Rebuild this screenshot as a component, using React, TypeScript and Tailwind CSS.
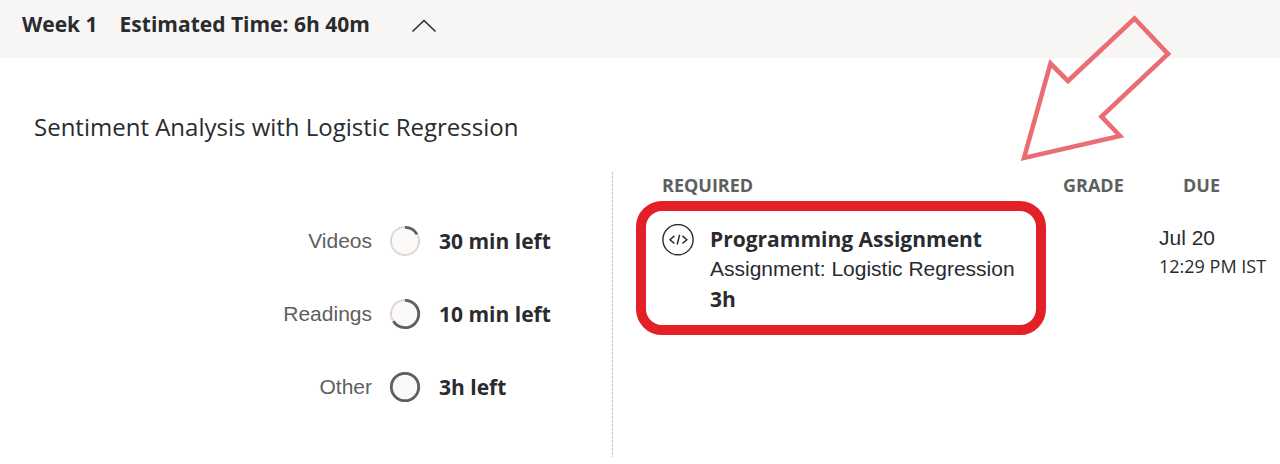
import { useState } from "react";

type Progress = { label: string; left: string; done: number };

const progress: Progress[] = [
  { label: "Videos", left: "30 min left", done: 0.17 },
  { label: "Readings", left: "10 min left", done: 0.66 },
  { label: "Other", left: "3h left", done: 1 },
];

function ProgressRing({ done }: { done: number }) {
  return (
    <svg viewBox="0 0 32 32" className="size-8 shrink-0" aria-hidden="true">
      <circle cx="16" cy="16" r="14" fill="#fcfaf9" stroke="#d6cac7" strokeWidth="2" strokeDasharray="1.6 0.6" />
      <circle
        cx="16"
        cy="16"
        r="13.7"
        fill="none"
        stroke="#5c605f"
        strokeWidth="2.8"
        pathLength="100"
        strokeDasharray={`${done * 100} ${done < 1 ? 100 : 0}`}
        transform="rotate(-90 16 16)"
      />
    </svg>
  );
}

function CodeIcon() {
  return (
    <svg viewBox="0 0 32 32" className="size-8 shrink-0" fill="none" stroke="#2a2b2e" aria-hidden="true">
      <circle cx="16" cy="15.7" r="15.1" strokeWidth="1.4" />
      <path d="M12.4 11.9 8 15.700l4.400 3.800M20.400 11.900l4.400 3.800-4.400 3.800M17.600 10.900 15.200 20.500" strokeWidth="1.5" />
    </svg>
  );
}

function Arrow() {
  return (
    <svg
      viewBox="0 0 152 148"
      className="pointer-events-none absolute bottom-full left-[358px] mb-[61px] h-[148px] w-[152px]"
      fill="none"
      stroke="#e96d72"
      strokeWidth="4.6"
      aria-hidden="true"
    >
      <path d="M4 143 30.500 48.500 48 66 114.500 3.500 148 39 81.500 101.500 100 121Z" />
    </svg>
  );
}

export default function App() {
  const [open, setOpen] = useState(true);
  return (
    <main className="min-h-screen bg-white font-['Open_Sans','Noto_Sans',sans-serif] text-[#2a2b2e]">
      <header className="h-[58px] bg-[#f8f6f5] px-[22px] pt-[10px]">
        <button
          type="button"
          aria-expanded={open}
          onClick={() => setOpen(!open)}
          className="flex items-center text-[21px] leading-7 font-bold"
        >
          <span>Week 1</span>
          <span className="ml-[22px]">Estimated Time: 6h 40m</span>
          <svg
            viewBox="0 0 26 14"
            className={open ? "mt-1 ml-[41px] h-3.5 w-[26px]" : "mt-1 ml-[41px] h-3.5 w-[26px] rotate-180"}
            fill="none"
            stroke="#2a2b2e"
            strokeWidth="1.6"
            aria-hidden="true"
          >
            <path d="M1.500 12.500 13 1.500 24.500 12.500" />
          </svg>
        </button>
      </header>
      {open && (
        <section>
          <h2 className="px-[34px] pt-[51px] text-2xl leading-9">Sentiment Analysis with Logistic Regression</h2>
          <div className="mt-[27px] flex">
            <ul className="flex flex-1 flex-col gap-[41px] pt-[53px] pl-[34px]">
              {progress.map((item) => (
                <li key={item.label} className="flex items-center">
                  <span className="flex-1 text-right font-['Liberation_Sans',Arial,sans-serif] text-[21px] leading-7 text-[#5c605f]">
                    {item.label}
                  </span>
                  <span className="ml-[17px] flex w-[223px] items-center gap-[18px]">
                    <ProgressRing done={item.done} />
                    <span className="text-[21px] leading-7 font-bold">{item.left}</span>
                  </span>
                </li>
              ))}
            </ul>
            <div className="h-[285px] w-px bg-[repeating-linear-gradient(to_bottom,#cfc7c4_0_3px,#f6f3f2_3px_4px)]" />
            <div className="w-[667px] pl-[49px]">
              <table className="w-full text-left">
                <thead className="text-lg leading-[26px] text-[#5c605f]">
                  <tr>
                    <th className="p-0 font-bold">REQUIRED</th>
                    <th className="w-24 p-0 font-bold">GRADE</th>
                    <th className="w-[121px] p-0 pl-6 font-bold">DUE</th>
                  </tr>
                </thead>
                <tbody>
                  <tr className="align-top">
                    <td className="p-0 pt-[26px]">
                      <div className="relative flex gap-4">
                        <CodeIcon />
                        <div className="text-[21px] leading-[30px]">
                          <p className="font-bold">Programming Assignment</p>
                          <p className="font-['Liberation_Sans',Arial,sans-serif]">Assignment: Logistic Regression</p>
                          <p className="font-bold">3h</p>
                        </div>
                        <div className="pointer-events-none absolute -top-[23px] -left-[26px] h-[134px] w-[410px] rounded-[26px] border-10 border-[#e32028]" />
                        <Arrow />
                      </div>
                    </td>
                    <td className="p-0" />
                    <td className="p-0 pt-[26px]">
                      <p className="font-['Liberation_Sans',Arial,sans-serif] text-[21px] leading-7">Jul 20</p>
                      <p className="text-lg leading-7">12:29 PM IST</p>
                    </td>
                  </tr>
                </tbody>
              </table>
            </div>
          </div>
        </section>
      )}
    </main>
  );
}
